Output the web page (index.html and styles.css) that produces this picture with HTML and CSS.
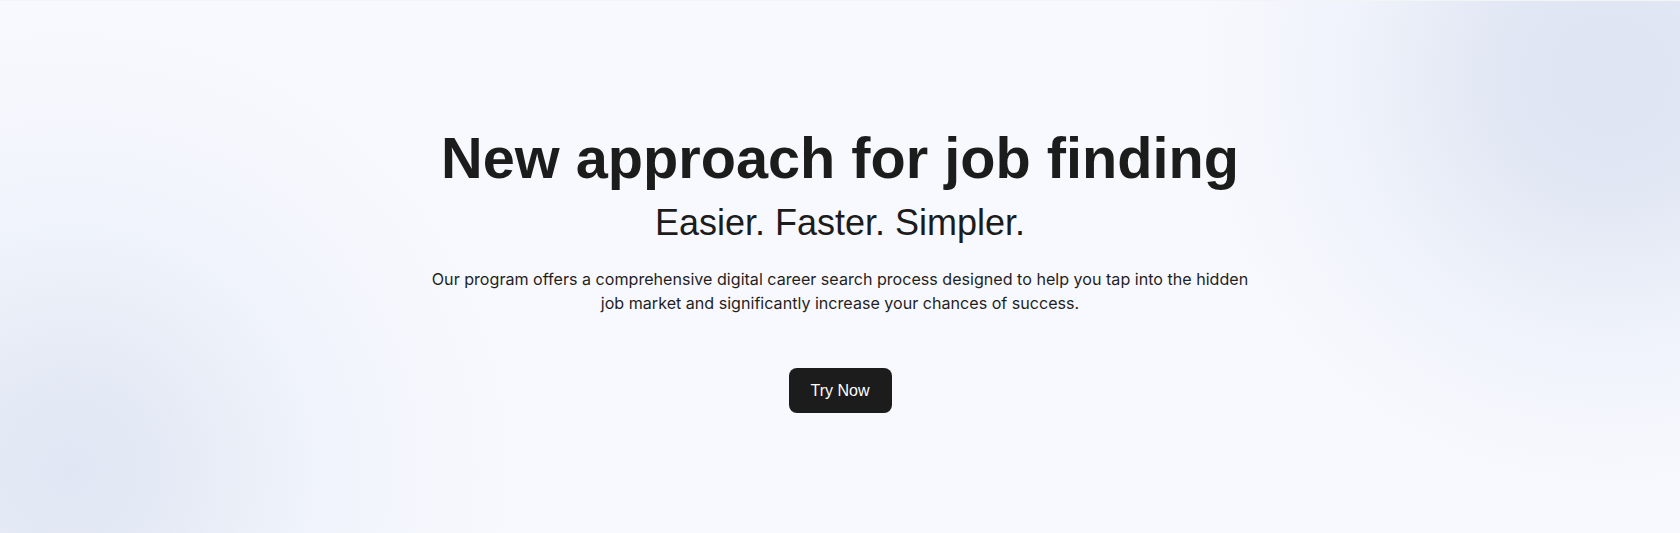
FILE: index.html
```html
<!DOCTYPE html>
<html lang="en">
<head>
<meta charset="utf-8">
<title>New approach for job finding</title>
<link rel="stylesheet" href="styles.css">
</head>
<body>
<section class="hero">
  <div class="hero-inner">
    <h1 class="hero-title">New approach for job finding</h1>
    <h2 class="hero-subtitle">Easier. Faster. Simpler.</h2>
    <p class="hero-text">Our program offers a comprehensive digital career search process designed to help you tap into the hidden job market and significantly increase your chances of success.</p>
    <a class="hero-button" href="#">Try Now</a>
  </div>
</section>
</body>
</html>
```
FILE: styles.css
```css
* { box-sizing: border-box; }
html, body { margin: 0; padding: 0; }
body {
  font-family: "Liberation Sans", Arial, sans-serif;
  color: #1c1c1c;
}
.hero {
  height: 533px;
  border-top: 1px solid #f3f4f7;
  background:
    radial-gradient(circle at 1610px 75px, rgba(222,228,242,1) 0, rgba(222,228,242,0.85) 120px, rgba(230,236,247,0.5) 260px, rgba(240,244,252,0) 420px),
    radial-gradient(circle at 70px 468px, rgba(224,230,243,1) 0, rgba(226,232,244,0.85) 110px, rgba(232,238,248,0.5) 250px, rgba(244,246,253,0) 460px),
    #f8f9fe;
  display: flex;
  justify-content: center;
}
.hero-inner {
  display: flex;
  flex-direction: column;
  align-items: center;
  text-align: center;
  padding-top: 122px;
}
.hero-title {
  margin: 0;
  font-size: 57.7px;
  line-height: 70px;
  font-weight: 700;
  letter-spacing: 0;
}
.hero-subtitle {
  margin: 8px 0 0;
  font-size: 36px;
  line-height: 44px;
  font-weight: 400;
}
.hero-text {
  margin: 22px 0 0;
  width: 840px;
  font-family: Inter, "Liberation Sans", sans-serif;
  font-size: 16.1px;
  line-height: 24px;
  color: #1f1f1f;
}
.hero-button {
  margin-top: 53px;
  display: inline-flex;
  align-items: center;
  justify-content: center;
  width: 103px;
  height: 45px;
  border-radius: 8px;
  background: #1c1c1c;
  color: #ffffff;
  font-size: 16px;
  text-decoration: none;
}
```
